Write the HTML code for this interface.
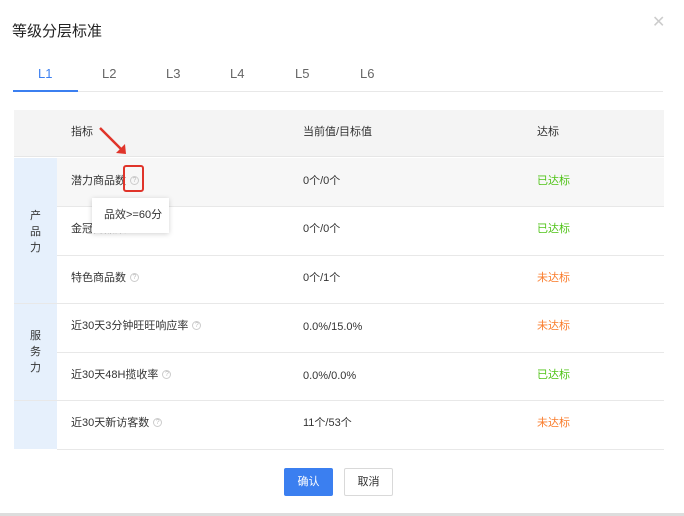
<!DOCTYPE html>
<html><head><meta charset="utf-8"><style>
*{margin:0;padding:0;box-sizing:border-box}
body{width:684px;height:516px;background:#fff;font-family:"Liberation Sans","Noto Sans CJK SC",sans-serif;position:relative;overflow:hidden;color:#333}
.a{position:absolute}
.t{font-size:11px;line-height:14px;color:#333;white-space:nowrap}
.q{display:inline-block;width:9px;height:9px;border:1px solid #ccc;border-radius:50%;font-size:7px;line-height:7px;text-align:center;color:#bbb;margin-left:4px;vertical-align:middle;position:relative;top:-1px}
.g{color:#52c41a;font-size:11px;line-height:14px}
.o{color:#fa7d2d;font-size:11px;line-height:14px}
.line{position:absolute;left:57px;width:607px;height:1px;background:#e8e8e8}
</style></head><body>
<div class="a" style="left:12px;top:20px;font-size:15px;color:#222">等级分层标准</div>
<div class="a" style="left:652px;top:12px;font-size:16px;color:#ccc">✕</div>
<div class="a" style="left:13px;top:91px;width:650px;height:1px;background:#e8e8e8"></div>
<div class="a" style="left:13px;top:90px;width:65px;height:2px;background:#3b7ff0"></div>
<div class="a t" style="left:38px;top:67px;font-size:13px;color:#3b7ff0">L1</div>
<div class="a t" style="left:102px;top:67px;font-size:13px;color:#666">L2</div>
<div class="a t" style="left:166px;top:67px;font-size:13px;color:#666">L3</div>
<div class="a t" style="left:230px;top:67px;font-size:13px;color:#666">L4</div>
<div class="a t" style="left:295px;top:67px;font-size:13px;color:#666">L5</div>
<div class="a t" style="left:360px;top:67px;font-size:13px;color:#666">L6</div>

<div class="a" style="left:14px;top:110px;width:650px;height:47px;background:#f4f4f4;border-bottom:1px solid #e6e6e6"></div>
<div class="a" style="left:57px;top:158px;width:607px;height:48px;background:#f7f7f7"></div>
<div class="a" style="left:14px;top:158px;width:43px;height:291px;background:#e6f0fc"></div>
<div class="a" style="left:14px;top:303px;width:43px;height:1px;background:#fff"></div>
<div class="a" style="left:14px;top:400px;width:43px;height:1px;background:#fff"></div>
<div class="line" style="top:206px"></div>
<div class="line" style="top:255px"></div>
<div class="line" style="top:303px;left:14px;width:650px"></div>
<div class="line" style="top:352px"></div>
<div class="line" style="top:400px;left:14px;width:650px"></div>
<div class="line" style="top:449px"></div>

<div class="a t" style="left:71px;top:125px">指标</div>
<div class="a t" style="left:303px;top:125px">当前值/目标值</div>
<div class="a t" style="left:537px;top:125px">达标</div>

<div class="a t" style="left:30px;top:208px;line-height:16px;width:12px;white-space:normal">产品力</div>
<div class="a t" style="left:30px;top:328px;line-height:16px;width:12px;white-space:normal">服务力</div>

<div class="a t" style="left:71px;top:174px">潜力商品数<span class="q">?</span></div>
<div class="a t" style="left:71px;top:222px">金冠商品数<span class="q">?</span></div>
<div class="a t" style="left:71px;top:271px">特色商品数<span class="q">?</span></div>
<div class="a t" style="left:71px;top:319px">近30天3分钟旺旺响应率<span class="q">?</span></div>
<div class="a t" style="left:71px;top:368px">近30天48H揽收率<span class="q">?</span></div>
<div class="a t" style="left:71px;top:416px">近30天新访客数<span class="q">?</span></div>

<div class="a t" style="left:303px;top:174px">0个/0个</div>
<div class="a t" style="left:303px;top:222px">0个/0个</div>
<div class="a t" style="left:303px;top:271px">0个/1个</div>
<div class="a t" style="left:303px;top:320px">0.0%/15.0%</div>
<div class="a t" style="left:303px;top:369px">0.0%/0.0%</div>
<div class="a t" style="left:303px;top:416px">11个/53个</div>

<div class="a g" style="left:537px;top:174px">已达标</div>
<div class="a g" style="left:537px;top:222px">已达标</div>
<div class="a o" style="left:537px;top:271px">未达标</div>
<div class="a o" style="left:537px;top:319px">未达标</div>
<div class="a g" style="left:537px;top:368px">已达标</div>
<div class="a o" style="left:537px;top:416px">未达标</div>

<div class="a t" style="left:92px;top:198px;width:77px;height:35px;background:#fff;box-shadow:0 1px 5px rgba(0,0,0,.18);padding:10px 0 0 12px">品效&gt;=60分</div>
<div class="a" style="left:123px;top:165px;width:21px;height:27px;border:2px solid #e0342a;border-radius:3px"></div>
<svg class="a" style="left:96px;top:124px" width="40" height="36"><path d="M4 4 L28 28" stroke="#e0342a" stroke-width="2.5"/><path d="M20 29 L30 30 L29 20 Z" fill="#e0342a"/></svg>

<div class="a" style="left:284px;top:468px;width:49px;height:28px;background:#3b7ff0;border-radius:2px;color:#fff;font-size:11px;text-align:center;line-height:28px">确认</div>
<div class="a" style="left:344px;top:468px;width:49px;height:28px;border:1px solid #d9d9d9;border-radius:2px;color:#333;font-size:11px;text-align:center;line-height:26px">取消</div>
<div class="a" style="left:0;top:513px;width:684px;height:3px;background:#ddd"></div>
</body></html>
